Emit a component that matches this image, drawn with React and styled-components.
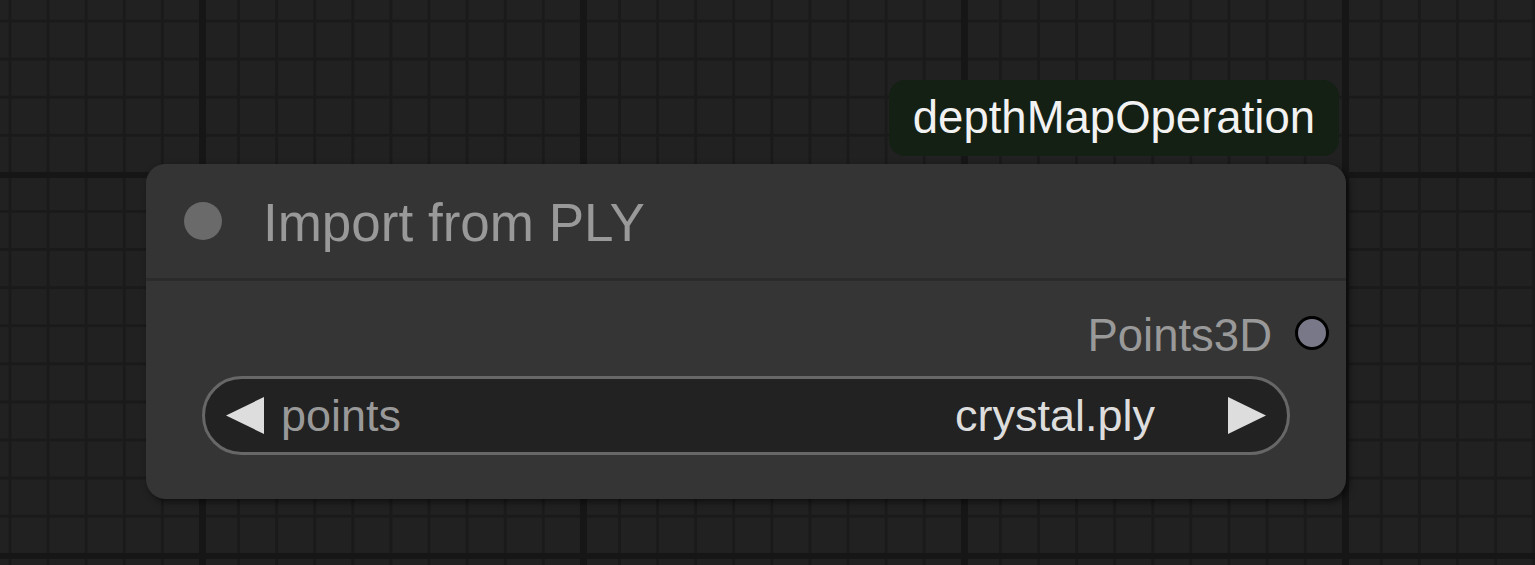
import React from 'react'
import styled, { createGlobalStyle } from 'styled-components'

const GlobalStyle = createGlobalStyle`
  html, body {
    margin: 0;
    padding: 0;
  }
  body {
    background: #202020;
    font-family: "Liberation Sans", Arial, sans-serif;
  }
`

// graph canvas with minor / major grid lines
const Canvas = styled.div`
  position: relative;
  width: 1535px;
  height: 565px;
  overflow: hidden;
  background-color: #212121;
  background-image:
    linear-gradient(to right, #161616 7px, transparent 7px),
    linear-gradient(to bottom, #161616 6px, transparent 6px),
    linear-gradient(to right, #1a1a1a 3px, transparent 3px),
    linear-gradient(to bottom, #1a1a1a 3px, transparent 3px);
  background-size: 381px 100%, 100% 381px, 38.1px 100%, 100% 38.1px;
  background-position: 199px 0, 0 172px, 8.5px 0, 0 19.5px;
`

const Node = styled.div`
  position: absolute;
  left: 146px;
  top: 164px;
  width: 1200px;
  background: #353535;
  border-radius: 20px;
  box-shadow: 3px 3px 7px rgba(0, 0, 0, 0.55);
`

const Badge = styled.div`
  position: absolute;
  right: 7px;
  bottom: calc(100% + 8px);
  height: 76px;
  display: flex;
  align-items: center;
  padding: 0 24px;
  border-radius: 16px;
  background: #142014;
  color: #f2f2f2;
  font-size: 45.5px;
  white-space: nowrap;
`

const TitleBar = styled.div`
  height: 114px;
  display: flex;
  align-items: center;
  gap: 41px;
  padding-left: 38px;
  background: #343434;
  border-radius: 20px 20px 0 0;
  border-bottom: 3px solid #2b2b2b;
`

const TitleDot = styled.span`
  width: 38px;
  height: 38px;
  border-radius: 50%;
  background: #6a6a6a;
`

const Title = styled.span`
  color: #999;
  font-size: 53px;
  padding-top: 2px;
  white-space: nowrap;
`

const Body = styled.div`
  padding: 26px 0 44px;
`

const OutputRow = styled.div`
  height: 52px;
  display: flex;
  align-items: center;
  justify-content: flex-end;
  gap: 23px;
  padding-right: 17px;
`

const SlotLabel = styled.span`
  color: #999;
  font-size: 45.5px;
  padding-top: 5px;
`

const SlotDot = styled.span`
  box-sizing: border-box;
  width: 34px;
  height: 34px;
  border-radius: 50%;
  border: 3.5px solid #000;
  background: ${p => p.color};
`

const Combo = styled.div`
  box-sizing: border-box;
  height: 79px;
  margin: 17px 56px 0;
  padding: 0 21px;
  display: flex;
  align-items: center;
  border: 3px solid #676767;
  border-radius: 40px;
  background: #222;
  font-size: 45px;
`

const ComboName = styled.span`
  color: #999;
  margin-left: 17px;
`

const ComboValue = styled.span`
  color: #ddd;
  margin-left: auto;
  margin-right: 73px;
`

function Arrow({ dir }) {
  const pts = dir === 'left' ? '38,0 38,37 0,18.5' : '0,0 0,37 38,18.5'
  return (
    <svg width="38" height="37" viewBox="0 0 38 37">
      <polygon points={pts} fill="#ddd" />
    </svg>
  )
}

export default function App() {
  return (
    <>
      <GlobalStyle />
      <Canvas>
        <Node>
          <Badge>depthMapOperation</Badge>
          <TitleBar>
            <TitleDot />
            <Title>Import from PLY</Title>
          </TitleBar>
          <Body>
            <OutputRow>
              <SlotLabel>Points3D</SlotLabel>
              <SlotDot color="#787888" />
            </OutputRow>
            <Combo>
              <Arrow dir="left" />
              <ComboName>points</ComboName>
              <ComboValue>crystal.ply</ComboValue>
              <Arrow dir="right" />
            </Combo>
          </Body>
        </Node>
      </Canvas>
    </>
  )
}
